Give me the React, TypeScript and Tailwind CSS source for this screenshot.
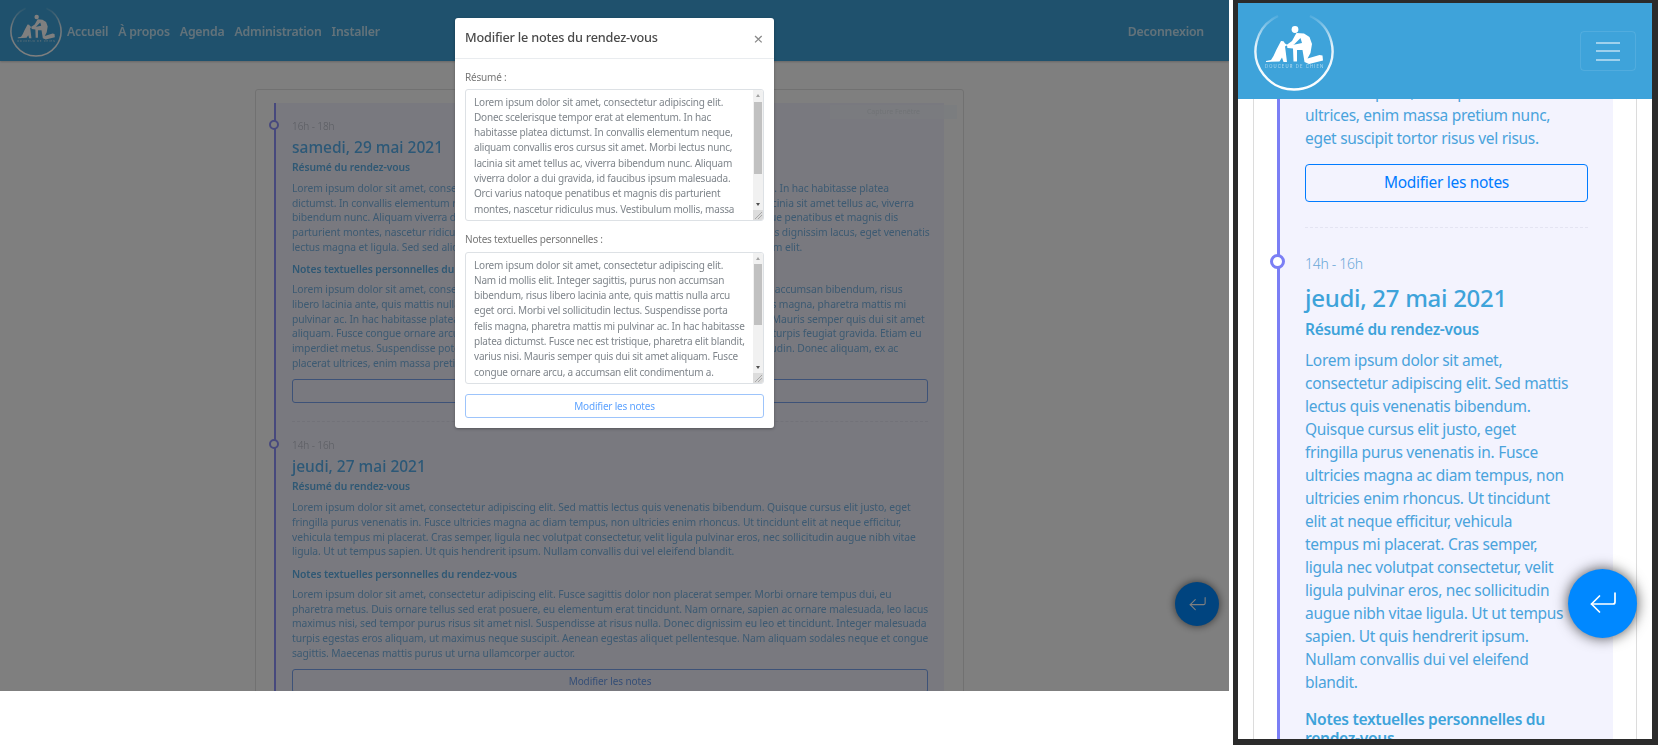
const firstSummary = [
  'Lorem ipsum dolor sit amet, consectetur adipiscing elit. Donec scelerisque tempor erat at elementum. In hac habitasse platea',
  'dictumst. In convallis elementum neque, aliquam convallis eros cursus sit amet. Morbi lectus nunc, lacinia sit amet tellus ac, viverra',
  'bibendum nunc. Aliquam viverra dolor a dui gravida, id faucibus ipsum malesuada. Orci varius natoque penatibus et magnis dis',
  'parturient montes, nascetur ridiculus mus. Vestibulum mollis, massa in tincidunt sodales, justo mi quis dignissim lacus, eget venenatis',
  'lectus magna et ligula. Sed sed aliquam turpis, vitae fermentum lorem. Nullam id sapien a nunc rutrum elit.',
];
const firstNotes = [
  'Lorem ipsum dolor sit amet, consectetur adipiscing elit. Nam id mollis elit. Integer sagittis, purus non accumsan bibendum, risus',
  'libero lacinia ante, quis mattis nulla arcu eget orci. Morbi vel sollicitudin lectus. Suspendisse porta felis magna, pharetra mattis mi',
  'pulvinar ac. In hac habitasse platea dictumst. Fusce nec est tristique, pharetra elit blandit, varius nisi. Mauris semper quis dui sit amet',
  'aliquam. Fusce congue ornare arcu, a accumsan elit condimentum a. Nulla facilisi. Sed vitae elit et mi turpis feugiat gravida. Etiam eu',
  'imperdiet metus. Suspendisse potenti. Praesent vel tellus nec nisi tristique, vitae rhoncus nibh sollicitudin. Donec aliquam, ex ac',
  'placerat ultrices, enim massa pretium nunc, eget suscipit tortor risus vel risus.',
];
const secondSummary = [
  'Lorem ipsum dolor sit amet, consectetur adipiscing elit. Sed mattis lectus quis venenatis bibendum. Quisque cursus elit justo, eget',
  'fringilla purus venenatis in. Fusce ultricies magna ac diam tempus, non ultricies enim rhoncus. Ut tincidunt elit at neque efficitur,',
  'vehicula tempus mi placerat. Cras semper, ligula nec volutpat consectetur, velit ligula pulvinar eros, nec sollicitudin augue nibh vitae',
  'ligula. Ut ut tempus sapien. Ut quis hendrerit ipsum. Nullam convallis dui vel eleifend blandit.',
];
const secondNotes = [
  'Lorem ipsum dolor sit amet, consectetur adipiscing elit. Fusce sagittis dolor non placerat semper. Morbi ornare tempus dui, eu',
  'pharetra metus. Duis ornare tellus sed erat posuere, eu elementum erat tincidunt. Nam ornare, sapien ac ornare malesuada, leo lacus',
  'maximus nisi, sed tempor purus risus sit amet nisl. Suspendisse at risus nulla. Donec dignissim eu leo et tincidunt. Integer malesuada',
  'turpis egestas eros aliquam, ut maximus neque suscipit. Aenean egestas aliquet pellentesque. Nam aliquam sodales neque et congue',
  'sagittis. Maecenas mattis purus ut urna ullamcorper auctor.',
];
const modalSummary = [
  'Lorem ipsum dolor sit amet, consectetur adipiscing elit.',
  'Donec scelerisque tempor erat at elementum. In hac',
  'habitasse platea dictumst. In convallis elementum neque,',
  'aliquam convallis eros cursus sit amet. Morbi lectus nunc,',
  'lacinia sit amet tellus ac, viverra bibendum nunc. Aliquam',
  'viverra dolor a dui gravida, id faucibus ipsum malesuada.',
  'Orci varius natoque penatibus et magnis dis parturient',
  'montes, nascetur ridiculus mus. Vestibulum mollis, massa',
];
const modalNotes = [
  'Lorem ipsum dolor sit amet, consectetur adipiscing elit.',
  'Nam id mollis elit. Integer sagittis, purus non accumsan',
  'bibendum, risus libero lacinia ante, quis mattis nulla arcu',
  'eget orci. Morbi vel sollicitudin lectus. Suspendisse porta',
  'felis magna, pharetra mattis mi pulvinar ac. In hac habitasse',
  'platea dictumst. Fusce nec est tristique, pharetra elit blandit,',
  'varius nisi. Mauris semper quis dui sit amet aliquam. Fusce',
  'congue ornare arcu, a accumsan elit condimentum a.',
];
const phoneSummary = [
  'Lorem ipsum dolor sit amet,',
  'consectetur adipiscing elit. Sed mattis',
  'lectus quis venenatis bibendum.',
  'Quisque cursus elit justo, eget',
  'fringilla purus venenatis in. Fusce',
  'ultricies magna ac diam tempus, non',
  'ultricies enim rhoncus. Ut tincidunt',
  'elit at neque efficitur, vehicula',
  'tempus mi placerat. Cras semper,',
  'ligula nec volutpat consectetur, velit',
  'ligula pulvinar eros, nec sollicitudin',
  'augue nibh vitae ligula. Ut ut tempus',
  'sapien. Ut quis hendrerit ipsum.',
  'Nullam convallis dui vel eleifend',
  'blandit.',
];

const Lines = ({ lines }: { lines: string[] }) => (
  <>
    {lines.map((line) => (
      <span key={line} className="block whitespace-nowrap">
        {line}
      </span>
    ))}
  </>
);

const Logo = ({ size }: { size: number }) => (
  <svg width={size} height={size} viewBox="0 0 80 80" className="shrink-0">
    <defs>
      <linearGradient id="ring" x1="0" y1="0" x2="0" y2="1">
        <stop offset="0" stopColor="#fff" stopOpacity="0.1" />
        <stop offset="0.4" stopColor="#fff" stopOpacity="0.85" />
        <stop offset="1" stopColor="#fff" />
      </linearGradient>
    </defs>
    <path d="M56 5A38.5 38.5 0 1 1 24 5" fill="none" stroke="url(#ring)" strokeWidth="2.4" />
    <circle cx="41" cy="18.5" r="3.4" fill="#fff" />
    <path
      d="M42.5 22 50 22.5 55.5 26 58 33 56.5 42 53.5 47.5 65.5 44 68.5 44.5 69 49.5 55 53 50.5 51 48.5 39 43 39 43 50.5 39.5 50.5 39 37.5 33.5 37 33 35.5 38.5 34 48 32 46.5 27 40 33.5 33.5 35.5 32.5 34 38 30 41 24.5Z"
      fill="#fff"
    />
    <path
      d="M27 30 29.5 30.2 31 32.5 33.5 34 31 35.5 31.5 39 33 51 29.5 51 28 46.5 25.5 50.5 12 51 12 50 17 49 19.5 45 22.5 38.5Z"
      fill="#fff"
    />
    <text x="11" y="57" fontSize="4.2" fontWeight="300" fill="#fff" opacity="0.75" textLength="58" fontFamily="Inter, sans-serif">
      DOUCEUR DE CHIEN
    </text>
  </svg>
);

const ReturnIcon = ({ className }: { className: string }) => (
  <svg viewBox="0 0 26 22" fill="none" stroke="#fff" strokeWidth="1.7" strokeLinecap="round" strokeLinejoin="round" className={className}>
    <path d="M25 1v9a2 2 0 0 1-2 2H1.5" />
    <path d="M9.5 4 1.5 12l8 8" />
  </svg>
);

const DesktopEntry = ({
  time,
  date,
  summary,
  notes,
  divider,
}: {
  time: string;
  date: string;
  summary: string[];
  notes: string[];
  divider?: boolean;
}) => (
  <div className="relative">
    <span className="absolute -left-[23px] top-[17px] h-[10px] w-[10px] rounded-full border-2 border-[#8f93fb] bg-white" />
    <p className="pt-[16px] text-[10px] leading-[14px] font-light text-[#b4b8c4]">{time}</p>
    <h3 className="mt-[3px] text-[15.5px] leading-[22px] font-medium tracking-[0px] text-[#58b0ee]">{date}</h3>
    <h4 className="mt-[2px] text-[10.3px] leading-[14px] font-semibold text-[#5fb0e8]">Résumé du rendez-vous</h4>
    <p className="mt-[7px] text-[#7ab4e4]">
      <Lines lines={summary} />
    </p>
    <h4 className="mt-[8px] text-[10.3px] leading-[14px] font-semibold text-[#5fb0e8]">Notes textuelles personnelles du rendez-vous</h4>
    <p className="mt-[6px] text-[#7ab4e4]">
      <Lines lines={notes} />
    </p>
    <button className="mt-[9px] block h-[24px] w-full rounded-[3px] border border-[#7aa5f0] text-[10px] text-[#6a9cec]">
      Modifier les notes
    </button>
    {divider && <div className="mt-[18px] border-t border-dashed border-[#e4e4f2]" />}
  </div>
);

const FakeTextarea = ({ lines, thumbTop, thumbHeight }: { lines: string[]; thumbTop: string; thumbHeight: string }) => (
  <div className="relative h-[132px] overflow-hidden rounded-[3px] border border-[#dde1e5] pl-[8px] pt-[4.5px] text-[10px] leading-[15.33px] text-[#7f858b]">
    <Lines lines={lines} />
    <div className="absolute right-0 top-0 h-full w-[10px] bg-[#f1f1f1]">
      <span className="absolute left-[3px] top-[4px] h-0 w-0 border-x-[2px] border-b-[3px] border-x-transparent border-b-[#a3a3a3]" />
      <span className={`absolute left-[1px] w-[8px] bg-[#c1c1c1] ${thumbTop} ${thumbHeight}`} />
      <span className="absolute left-[3px] bottom-[14px] h-0 w-0 border-x-[2px] border-t-[3px] border-x-transparent border-t-[#505050]" />
      <svg viewBox="0 0 10 10" className="absolute bottom-0 left-0 h-[10px] w-[10px] bg-[#dcdcdc]">
        <path d="M2 9 9 2M5 9 9 5" stroke="#a8a8a8" strokeWidth="1" />
      </svg>
    </div>
  </div>
);

const Modal = () => (
  <div className="absolute left-[455px] top-[18px] w-[319px] rounded-[3px] bg-white tracking-[-0.2px] shadow-[0_1px_3px_rgba(0,0,0,0.3)]">
    <div className="flex h-[41px] items-center justify-between border-b border-[#e9ecef] pl-[10px] pr-[11px]">
      <h5 className="text-[12.7px] font-medium text-[#4a4a4a]">Modifier le notes du rendez-vous</h5>
      <span className="text-[17px] leading-none text-[#8a8a8a]">×</span>
    </div>
    <div className="px-[10px] pb-[10px]">
      <label className="block h-[30px] pt-[11px] text-[10px] leading-[15px] text-[#777]">Résumé :</label>
      <FakeTextarea lines={modalSummary} thumbTop="top-[12px]" thumbHeight="h-[72px]" />
      <label className="block h-[31px] pt-[11px] text-[10px] leading-[15px] text-[#777]">Notes textuelles personnelles :</label>
      <FakeTextarea lines={modalNotes} thumbTop="top-[11px]" thumbHeight="h-[61px]" />
      <button className="mt-[10px] block h-[24px] w-full rounded-[3px] border border-[#9dc4fb] text-[10px] text-[#5ea3ff]">
        Modifier les notes
      </button>
    </div>
  </div>
);

const DesktopView = () => (
  <div className="relative h-[691px] w-[1229px] shrink-0 overflow-hidden bg-white font-['Noto_Sans',sans-serif] blur-[0.35px]">
    <header className="flex h-[61px] items-center bg-[#3ea3da] pl-[10px] pr-[25px] tracking-[-0.2px] shadow-[0_1px_2px_rgba(0,0,0,0.2)]">
      <Logo size={52} />
      <nav className="ml-[5px] flex gap-[10px] pt-[3px] text-[12.3px] font-semibold text-white/70">
        <a>Accueil</a>
        <a>À propos</a>
        <a>Agenda</a>
        <a>Administration</a>
        <a>Installer</a>
      </nav>
      <a className="ml-auto pt-[3px] text-[12.3px] font-semibold text-white/70">Deconnexion</a>
    </header>
    <main className="ml-[255px] mt-[28px] w-[709px] rounded-t-[3px] border border-[#e2e2e2] pl-[18px] pr-[19px] pt-[13px] text-[10.3px] leading-[14.67px] tracking-[-0.08px]">
      <div className="border-l-2 border-[#8f93fb] bg-[#f3f3fe] pl-[16px] pr-[16px]">
        <DesktopEntry time="16h - 18h" date="samedi, 29 mai 2021" summary={firstSummary} notes={firstNotes} divider />
        <DesktopEntry time="14h - 16h" date="jeudi, 27 mai 2021" summary={secondSummary} notes={secondNotes} />
      </div>
    </main>
    <span className="absolute left-[830px] top-[105px] flex h-[14px] w-[127px] items-center justify-center bg-[#f4f8ff]/70 text-[7px] text-[#e2e6ec]">
      Capture Fenêtre
    </span>
    <button className="absolute left-[1175px] top-[582px] flex h-[44px] w-[44px] items-center justify-center rounded-full bg-[#0088ff] shadow-[0_0_8px_rgba(0,0,0,0.6)]">
      <ReturnIcon className="h-[14px] w-[17px]" />
    </button>
    <div className="absolute inset-0 bg-black/50" />
    <Modal />
  </div>
);

const PhoneView = () => (
  <div className="ml-[4px] flex h-[745px] w-[425px] shrink-0 flex-col border-b-[6px] border-l-[5px] border-r-[6px] border-t-[3px] border-[#2b2b2b] bg-white font-['Noto_Sans',sans-serif] tracking-[-0.3px]">
    <header className="z-10 flex h-[96px] shrink-0 items-center justify-between bg-[#3ea3da] px-[16px]">
      <Logo size={80} />
      <button className="flex h-[40px] w-[56px] flex-col items-center justify-center gap-[6.5px] rounded-[4px] border border-white/10">
        <span className="h-[2px] w-[24px] bg-white/50" />
        <span className="h-[2px] w-[24px] bg-white/50" />
        <span className="h-[2px] w-[24px] bg-white/50" />
      </button>
    </header>
    <div className="relative flex-1 overflow-hidden">
      <div className="absolute inset-y-0 left-[15px] right-[15px] border-x border-[#dcdcdc]" />
      <div className="relative mx-[39px] -mt-[18.5px] border-l-[3px] border-[#7b7ff5] bg-[#f3f3fe] px-[25px]">
        <p className="text-[15.5px] leading-[23px] text-[#4aa3dc]">
          <Lines lines={['Donec aliquam, ex ac placerat', 'ultrices, enim massa pretium nunc,', 'eget suscipit tortor risus vel risus.']} />
        </p>
        <button className="mt-[14.5px] block h-[38px] w-full rounded-[4px] border border-[#007bff] text-[15.5px] text-[#007bff]">
          Modifier les notes
        </button>
        <div className="mt-[25px] border-t border-dashed border-[#e4e4f2]" />
        <div className="relative">
          <span className="absolute -left-[35px] top-[26px] h-[15px] w-[15px] rounded-full border-[3px] border-[#7b7ff5] bg-white" />
          <p className="pt-[26px] text-[14px] leading-[20px] font-light text-[#6aa8d8]">14h - 16h</p>
          <h3 className="mt-[8px] text-[24px] leading-[32px] font-medium text-[#3ea3da]">jeudi, 27 mai 2021</h3>
          <h4 className="mt-[5px] text-[15.5px] leading-[20px] font-semibold text-[#3ea3da]">Résumé du rendez-vous</h4>
          <p className="mt-[9.5px] text-[15.5px] leading-[23px] text-[#4aa3dc]">
            <Lines lines={phoneSummary} />
          </p>
          <h4 className="mt-[16px] text-[15.6px] leading-[19.2px] font-semibold text-[#3ea3da]">
            <Lines lines={['Notes textuelles personnelles du', 'rendez-vous']} />
          </h4>
        </div>
      </div>
    </div>
    <button className="absolute left-[1568px] top-[568.5px] z-20 flex h-[69px] w-[69px] items-center justify-center rounded-full bg-[#0088ff] shadow-[0_0_14px_rgba(0,0,0,0.7)]">
      <ReturnIcon className="h-[22px] w-[26px]" />
    </button>
  </div>
);

export default function App() {
  return (
    <div className="relative flex h-[750px] w-[1663px] items-start overflow-hidden bg-white">
      <DesktopView />
      <PhoneView />
    </div>
  );
}
